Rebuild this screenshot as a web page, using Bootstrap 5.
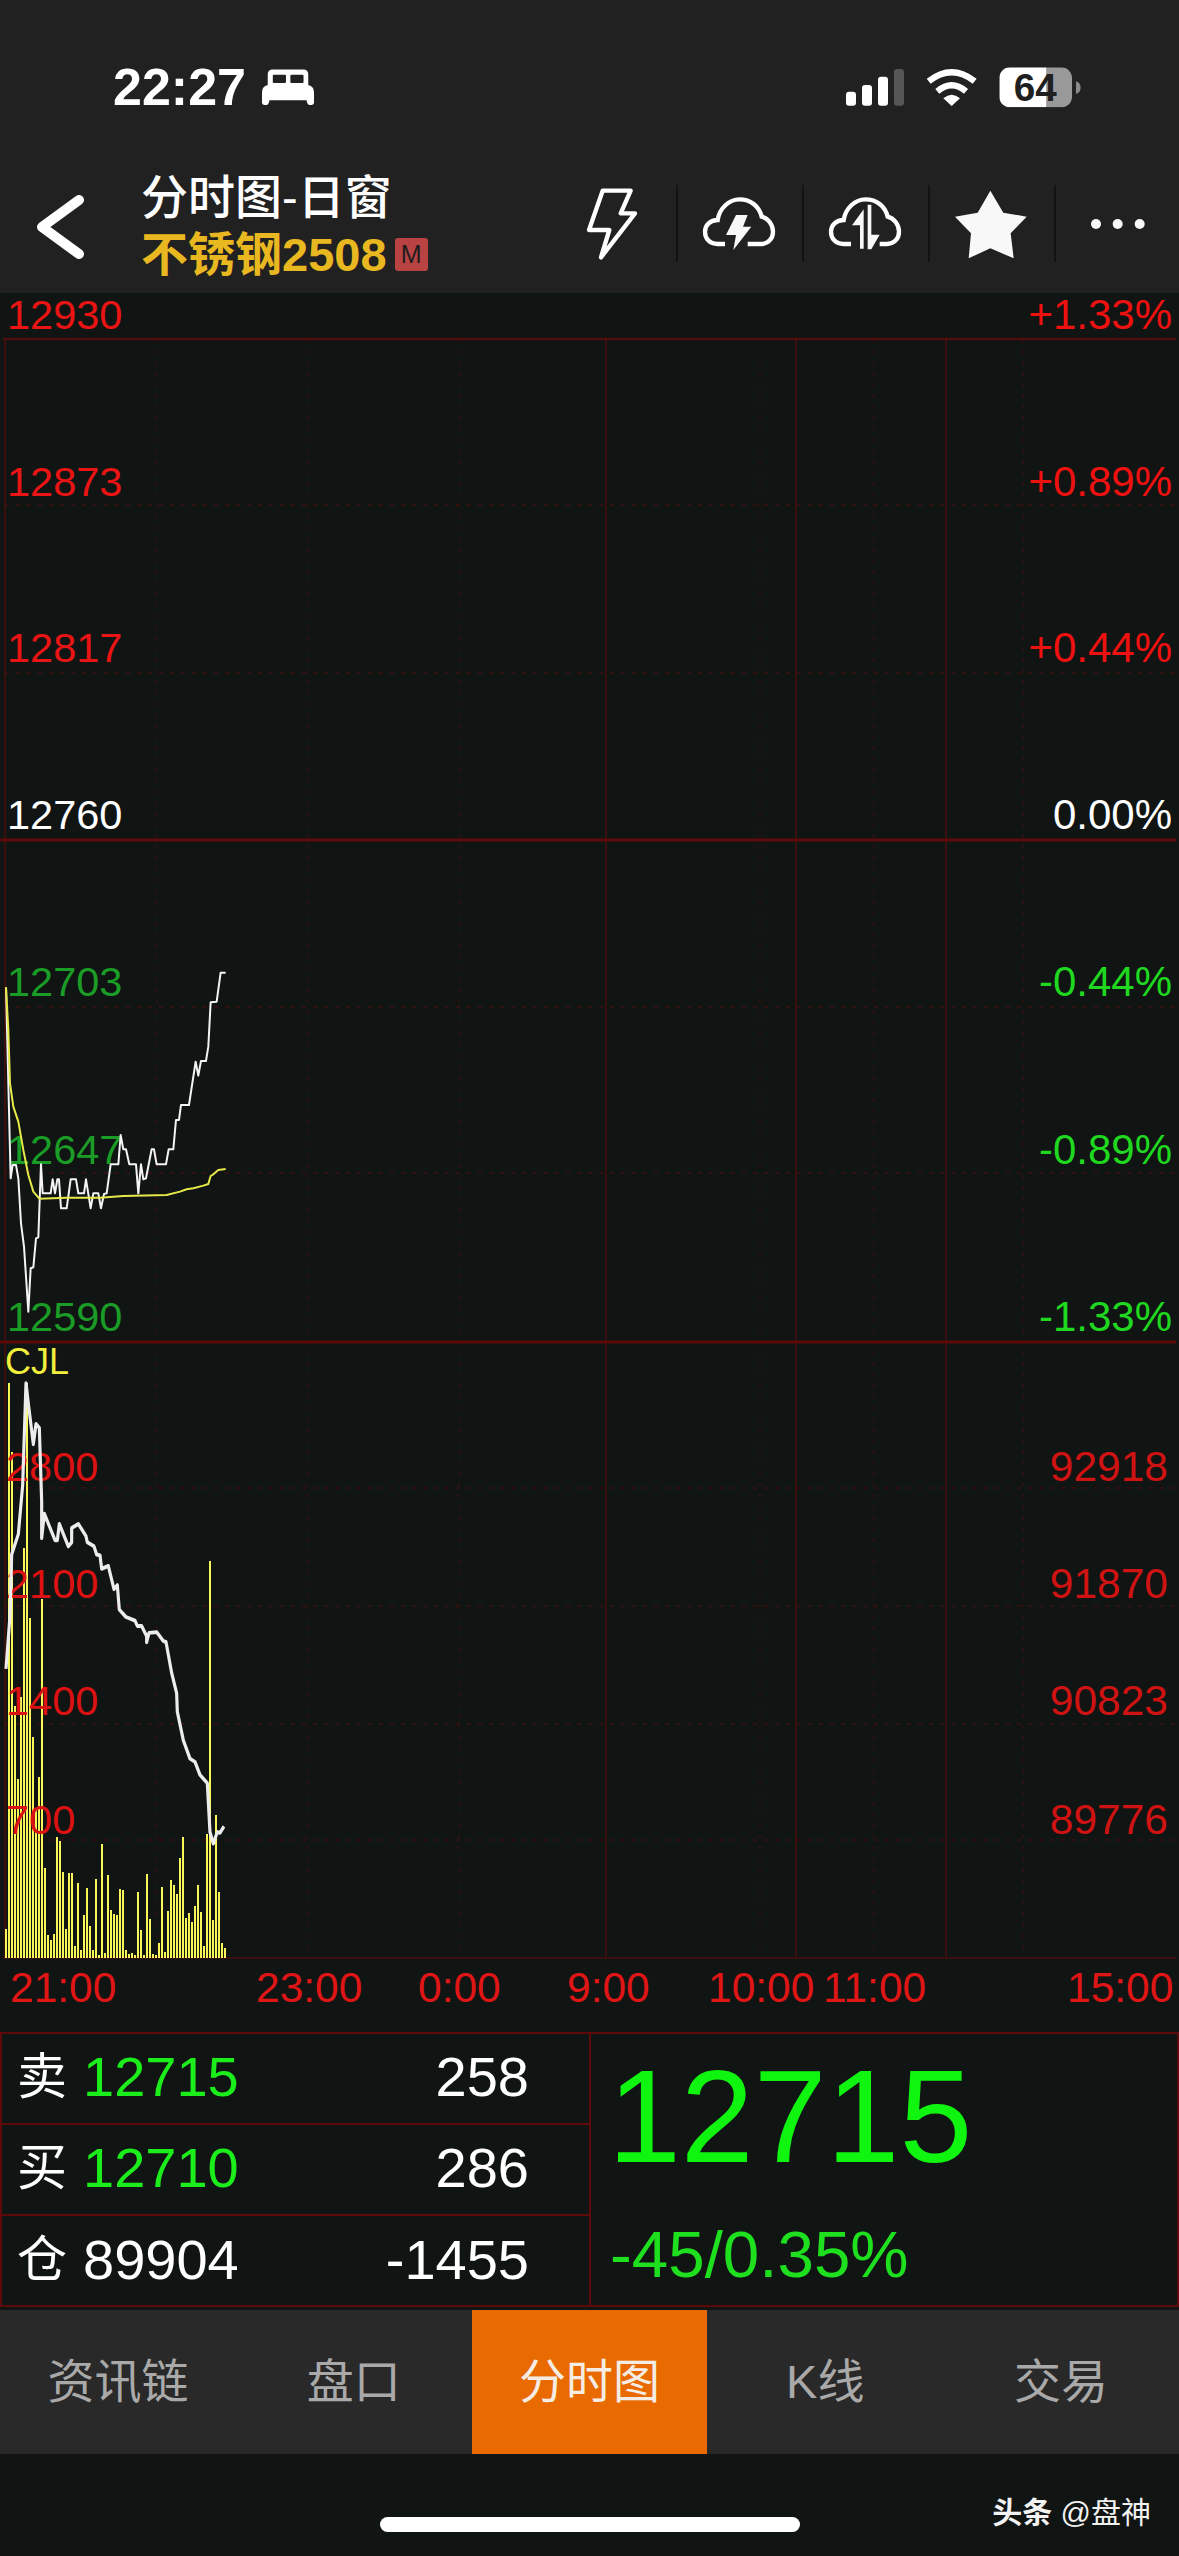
<!DOCTYPE html>
<html lang="zh">
<head>
  <meta charset="UTF-8">
  <title>分时图-日窗</title>
  <link href="https://cdn.jsdelivr.net/npm/bootstrap@5.3.3/dist/css/bootstrap.min.css" rel="stylesheet">
  <style>
    body { background: #101413; color: #fff; font-family: "Liberation Sans", "Noto Sans CJK SC", sans-serif; width: 1179px; height: 2556px; overflow: hidden; }
    .status-strip { height: 120px; padding: 54px 79px 0 113px; background: #212121; }
    .clock { font-size: 52px; font-weight: 700; line-height: 1; letter-spacing: 0; }
    .top-strip { height: 173px; padding-top: 49px; padding-bottom: 10px; background: #212121; }
    .back-btn { width: 141px; padding-left: 33px; }
    .title-main { font-size: 47px; line-height: 57px; font-weight: 500; }
    .title-sub { font-size: 47px; line-height: 57px; font-weight: 700; color: #e9b820; }
    .m-tag { width: 33px; height: 33px; margin-left: 8px; background: #b94343; color: #1d1d1d; font-size: 25px; line-height: 33px; border-radius: 3px; text-align: center; font-weight: 400; }
    .tool-row { margin-right: -3px; }
    .tool-cell { width: 126px; height: 77px; margin-top: 16px; border-right: 2px solid #131313; }
    .tool-cell:last-child { border-right: 0; }
    .tool-cell svg { display: block; width: 126px; height: 77px; }
    .chart-svg { display: block; width: 1179px; height: 1745px; margin-top: -6px; }
    .chart-svg text { font-family: "Liberation Sans", sans-serif; font-size: 41.5px; }
    .chart-svg .scale-right text { font-size: 42px; }
    .chart-svg .oi-right text { font-size: 42.5px; }
    .chart-svg .time-axis text { font-size: 42.5px; }
    .chart-svg .cjl-text { font-size: 36px; }
    .grid-main { stroke: #5e0a0a; stroke-width: 3; }
    .grid-solid { stroke: #4a0e0e; stroke-width: 1.5; }
    .grid-top { stroke: #4f0e0e; stroke-width: 2.5; }
    .grid-dash { stroke: #3d1010; stroke-width: 1.5; stroke-dasharray: 4 7; }
    .grid-dim { stroke: #2c1212; stroke-width: 1.5; stroke-dasharray: 4 7; }
    .quote-box { height: 275px; margin-bottom: 3px; border: 2px solid #5e0a0a; }
    .quote-left { width: 589px; border-right: 2px solid #5e0a0a; }
    .quote-row { height: 91px; padding: 0 60px 3px 15px; font-size: 56px; border-bottom: 2px solid #5e0a0a; }
    .quote-row:last-child { border-bottom: 0; }
    .quote-tag { font-size: 50px; width: 66px; }
    .up-green { color: #1bee1b; }
    .quote-big { font-size: 131px; line-height: 1; color: #10f510; padding: 17px 0 0 17px; }
    .quote-change { font-size: 65.5px; line-height: 1; color: #1fe01f; padding: 0 0 18px 19px; }
    .tab-strip { height: 144px; background: #292929; }
    .tab-item { height: 144px; line-height: 144px; padding: 0; font-size: 47px; color: #a9a9a9; }
    .tab-item.active { background: #e86a00; color: #f5ede4; }
    .foot-strip { height: 102px; }
    .home-bar { width: 420px; height: 15px; margin-top: 63px; background: #fff; border-radius: 8px; }
    .watermark { right: 28px; top: 42px; font-size: 30px; line-height: 34px; color: #f2f2f2; white-space: nowrap; }
  </style>
</head>
<body>
  <!-- status bar -->
  <div class="status-strip d-flex justify-content-between align-items-center">
    <div class="d-flex align-items-center gap-3">
      <span class="clock">22:27</span>
      <svg width="52" height="36" viewBox="483 32 154 106">
        <path fill="#fff" d="M500 80V48Q500 33 515 33H605Q620 33 620 48V80Z"/>
        <rect x="515" y="49" width="39" height="24" rx="3" fill="#212121"/>
        <rect x="567" y="49" width="39" height="24" rx="3" fill="#212121"/>
        <path fill="#fff" d="M483 100Q483 80 505 78H615Q637 80 637 100V132Q637 138 630 138H624Q617 138 615 124H505Q503 138 496 138H490Q483 138 483 132Z"/>
      </svg>
    </div>
    <svg width="270" height="75" viewBox="0 0 810 225">
      <rect x="48" y="125" width="30" height="42" rx="9" fill="#fff"/>
      <rect x="96" y="105" width="30" height="62" rx="9" fill="#fff"/>
      <rect x="144" y="80" width="30" height="87" rx="9" fill="#fff"/>
      <rect x="192" y="57" width="30" height="110" rx="9" fill="#565656"/>
      <path fill="none" stroke="#fff" stroke-width="19" d="M296 94Q365 40 434 94M322 124Q365 88 408 124"/>
      <path fill="#fff" d="M340 145Q365 124 390 145L365 168Z"/>
      <clipPath id="batt"><rect x="508" y="52" width="218" height="120" rx="32"/></clipPath>
      <g clip-path="url(#batt)">
        <rect x="508" y="52" width="142" height="120" fill="#fff"/>
        <rect x="650" y="52" width="80" height="120" fill="#999"/>
      </g>
      <path fill="#8a8a8a" d="M738 94a20 20 0 0 1 0 38Z"/>
      <text x="616" y="153" text-anchor="middle" font-family="Liberation Sans" font-weight="700" font-size="116" fill="#1f1f1f">64</text>
    </svg>
  </div>

  <!-- title bar -->
  <div class="top-strip d-flex align-items-start">
    <div class="back-btn">
      <svg width="56" height="68" viewBox="0 0 56 68" class="d-block mt-4">
        <path d="M46 7 9 34l37 27" fill="none" stroke="#fff" stroke-width="10" stroke-linecap="round" stroke-linejoin="round"/>
      </svg>
    </div>
    <div class="flex-grow-1">
      <div class="title-main">分时图-日窗</div>
      <div class="title-sub d-flex align-items-center">不锈钢2508<span class="m-tag">M</span></div>
    </div>
    <div class="tool-row d-flex">
      <div class="tool-cell">
        <svg viewBox="-54 45 378 231"><path d="M98 62H182L152 130H195L93 262 118 180H57Z" fill="none" stroke="#fff" stroke-width="13" stroke-linejoin="round"/></svg>
      </div>
      <div class="tool-cell">
        <svg viewBox="321 45 378 231">
          <path d="M462 222H440C415 222 402 205 402 185 402 165 418 150 440 150 445 115 475 88 505 88 540 88 565 110 572 140 592 145 606 165 606 185 606 207 590 222 570 222H530" fill="none" stroke="#fff" stroke-width="13"/>
          <path d="M495 135H530L516 170H541L487 240 495 195H465Z" fill="#f8f8f8"/>
        </svg>
      </div>
      <div class="tool-cell">
        <svg viewBox="321 45 378 231">
          <path d="M462 222H440C415 222 402 205 402 185 402 165 418 150 440 150 445 115 475 88 505 88 540 88 565 110 572 140 592 145 606 165 606 185 606 207 590 222 570 222H548" fill="none" stroke="#fff" stroke-width="13"/>
          <path d="M500 118V236H489V166H465ZM512 104H523V194H548L523 238H512Z" fill="#f8f8f8"/>
        </svg>
      </div>
      <div class="tool-cell">
        <svg viewBox="207 45 378 231"><path d="M388 62 427 128 497 140 449 190 458 265 388 235 323 265 330 190 282 140 350 128Z" fill="#f8f8f8"/></svg>
      </div>
      <div class="tool-cell">
        <svg viewBox="582 45 378 231"><circle cx="702" cy="162" r="15" fill="#f8f8f8"/><circle cx="767" cy="162" r="15" fill="#f8f8f8"/><circle cx="833" cy="162" r="15" fill="#f8f8f8"/></svg>
      </div>
    </div>
  </div>

  <!-- chart: viewBox uses page coordinates, starts a little above so the top labels have room -->
  <svg class="chart-svg" viewBox="0 287 1179 1745">
    <g class="grid-dim">
      <path d="M157 339V1958M307 339V1958M459 339V1958M760 339V1958M874 339V1958M1023 339V1958"/>
    </g>
    <g class="grid-solid">
      <path d="M606 339V1958M796 339V1958M946 339V1958M5 339V1958M3 1958H1176"/>
    </g>
    <g class="grid-dash">
      <path d="M5 505H1176M5 673H1176M5 1007H1176M5 1173H1176M5 1488H1176M5 1606H1176M5 1724H1176M5 1840H1176"/>
    </g>
    <path class="grid-top" d="M3 339H1176"/>
    <path class="grid-main" d="M0 840H1176M0 1342H1176"/>

    <g id="vol-bars" fill="#f9f65a" shape-rendering="crispEdges" transform="translate(0 1330) scale(.3333 .4082)"></g>

    <g fill="#ea1414">
      <text x="7" y="328.5">12930</text><text x="7" y="495.5">12873</text><text x="7" y="661.5">12817</text>
    </g>
    <text x="7" y="828.5" fill="#fff">12760</text>
    <g fill="#1b9c26">
      <text x="7" y="995.5">12703</text><text x="7" y="1163.5">12647</text><text x="7" y="1330.5">12590</text>
    </g>
    <g class="scale-right" fill="#ef1010" text-anchor="end">
      <text x="1172" y="328.5">+1.33%</text><text x="1172" y="495.5">+0.89%</text><text x="1172" y="661.5">+0.44%</text>
    </g>
    <g class="scale-right" fill="#fff" text-anchor="end"><text x="1172" y="828.5">0.00%</text></g>
    <g class="scale-right" fill="#1fd81f" text-anchor="end">
      <text x="1172" y="995.5">-0.44%</text><text x="1172" y="1163.5">-0.89%</text><text x="1172" y="1330.5">-1.33%</text>
    </g>
    <text class="cjl-text" x="5" y="1374" fill="#f2ee3c">CJL</text>
    <g fill="#dc1212">
      <text x="6" y="1480.5">2800</text><text x="6" y="1597.5">2100</text><text x="6" y="1714.5">1400</text><text x="6" y="1833.5">700</text>
    </g>
    <g class="oi-right" fill="#cf1212" text-anchor="end">
      <text x="1168" y="1480.5">92918</text><text x="1168" y="1597.5">91870</text><text x="1168" y="1714.5">90823</text><text x="1168" y="1833.5">89776</text>
    </g>
    <g class="time-axis" fill="#e01616">
      <text x="10" y="2002">21:00</text><text x="256" y="2002">23:00</text><text x="418" y="2002">0:00</text><text x="567" y="2002">9:00</text><text x="708" y="2002">10:00</text><text x="823" y="2002">11:00</text><text x="1067" y="2002">15:00</text>
    </g>

    <!-- price and average, traced at 3x -->
    <g transform="translate(0 930) scale(.3333)" fill="none" stroke-linejoin="round">
      <polyline stroke="#f4f4f4" stroke-width="6" points="18,172 32,745 38,705 48,705 55,745 63,880 72,950 85,1145 92,1015 100,1012 108,925 115,922 123,703 128,790 152,790 158,748 165,790 172,748 177,748 183,835 200,835 212,748 228,748 235,790 252,790 258,748 272,835 280,790 295,790 303,835 312,792 320,790 332,703 355,703 362,615 370,658 378,658 388,703 408,703 415,790 423,703 430,748 438,745 455,658 462,658 470,703 498,703 506,658 520,658 528,570 537,570 543,525 567,525 587,395 595,437 603,393 618,393 625,350 632,217 650,215 662,128 677,128"/>
      <polyline stroke="#e6ea48" stroke-width="6" points="18,172 25,300 30,460 40,530 55,575 70,660 85,735 100,785 118,806 200,803 300,803 370,798 500,795 540,785 560,778 580,775 610,767 625,762 632,738 640,733 655,720 677,717"/>
    </g>
    <!-- open interest -->
    <g transform="translate(0 1330) scale(.3333 .4082)" fill="none" stroke-linejoin="round">
      <polyline stroke="#ececec" stroke-width="9.5" points="18,830 30,700 35,550 55,500 68,380 78,130 85,180 100,280 108,230 118,240 125,420 125,510 133,450 165,515 172,515 178,475 205,530 215,520 215,485 235,475 258,505 262,520 282,530 290,550 300,552 305,585 325,578 342,635 352,625 358,685 378,703 405,712 412,725 425,725 440,750 440,765 447,742 470,740 490,762 498,764 515,840 530,890 532,935 550,1005 570,1050 585,1058 600,1090 622,1110 630,1230 640,1258 652,1230 660,1232 672,1216"/>
    </g>
  </svg>

  <!-- quote panel -->
  <div class="quote-box d-flex">
    <div class="quote-left">
      <div class="quote-row d-flex align-items-center">
        <span class="quote-tag">卖</span><span class="up-green">12715</span><span class="ms-auto">258</span>
      </div>
      <div class="quote-row d-flex align-items-center">
        <span class="quote-tag">买</span><span class="up-green">12710</span><span class="ms-auto">286</span>
      </div>
      <div class="quote-row d-flex align-items-center">
        <span class="quote-tag">仓</span><span>89904</span><span class="ms-auto">-1455</span>
      </div>
    </div>
    <div class="flex-grow-1 d-flex flex-column justify-content-between">
      <div class="quote-big">12715</div>
      <div class="quote-change">-45/0.35%</div>
    </div>
  </div>

  <!-- tabs -->
  <nav class="nav nav-justified tab-strip">
    <a class="nav-link tab-item" href="#">资讯链</a>
    <a class="nav-link tab-item" href="#">盘口</a>
    <a class="nav-link tab-item active" href="#">分时图</a>
    <a class="nav-link tab-item" href="#">K线</a>
    <a class="nav-link tab-item" href="#">交易</a>
  </nav>

  <div class="foot-strip d-flex justify-content-center position-relative">
    <div class="home-bar"></div>
    <div class="watermark position-absolute"><b>头条</b> @盘神</div>
  </div>

  <script src="https://cdn.jsdelivr.net/npm/bootstrap@5.3.3/dist/js/bootstrap.bundle.min.js"></script>
  <script>
    // volume bars, top of each bar read off the reference at 3x
    const tops = [1468,130,300,920,1100,900,535,130,705,998,1170,1095,660,1318,1482,1495,1480,1242,1252,1328,1468,1330,1330,1508,1355,1520,1432,1366,1460,1520,1346,1530,1260,1525,1335,1420,1430,1432,1370,1372,1518,1528,1526,1532,1377,1470,1532,1333,1444,1528,1530,1502,1364,1524,1424,1347,1360,1382,1294,1242,1440,1428,1450,1412,1360,1426,1508,1235,567,1445,1188,1378,1502,1514];
    const barGroup = document.getElementById('vol-bars');
    tops.forEach((top, i) => {
      const bar = document.createElementNS('http://www.w3.org/2000/svg', 'rect');
      bar.setAttribute('x', 15 + i * 9);
      bar.setAttribute('y', top);
      bar.setAttribute('width', 6);
      bar.setAttribute('height', 1538 - top);
      barGroup.appendChild(bar);
    });
  </script>
</body>
</html>
